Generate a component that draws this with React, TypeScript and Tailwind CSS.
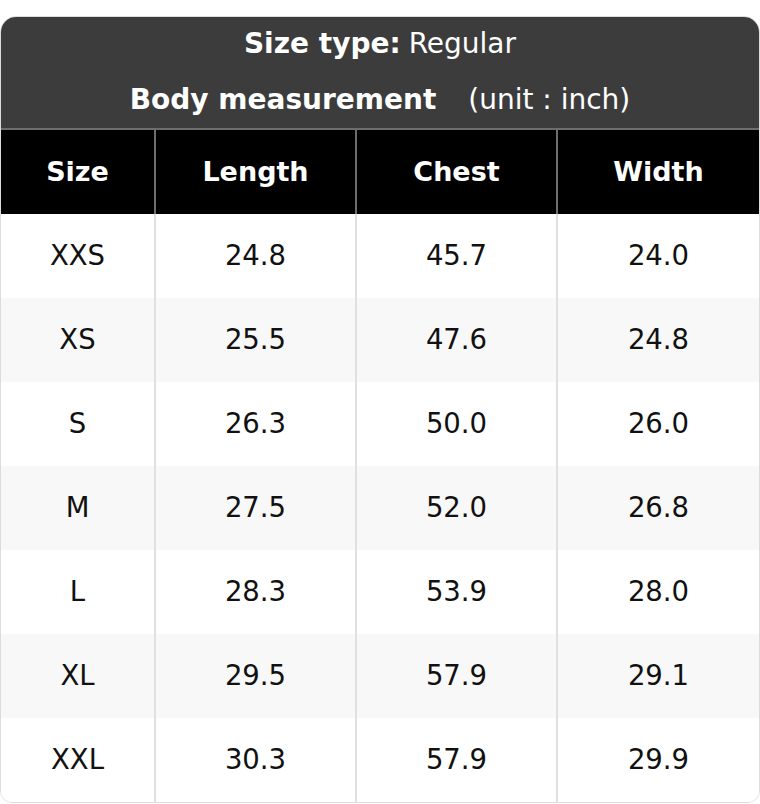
import React from 'react';

const rows = [
    ['XXS', '24.8', '45.7', '24.0'],
    ['XS', '25.5', '47.6', '24.8'],
    ['S', '26.3', '50.0', '26.0'],
    ['M', '27.5', '52.0', '26.8'],
    ['L', '28.3', '53.9', '28.0'],
    ['XL', '29.5', '57.9', '29.1'],
    ['XXL', '30.3', '57.9', '29.9'],
];

const cols = ['Size', 'Length', 'Chest', 'Width'];

const App = () => {
    return (
        <div className="bg-white pt-4 w-[760px] font-['DejaVu_Sans',sans-serif]">
            <div className="rounded-t-2xl rounded-b-xl border border-[#dcdcdc] overflow-hidden">
                <div className="bg-[#3c3c3c] text-white text-[28px] h-[111px] flex flex-col items-center">
                    <div className="h-[54px] flex items-center">
                        <span className="font-bold">Size type:</span>
                        <span className="ml-2">Regular</span>
                    </div>
                    <div className="h-[57px] flex items-center">
                        <span className="font-bold">Body measurement</span>
                        <span className="ml-8">(unit : inch)</span>
                    </div>
                </div>
                <div className="h-[2px] bg-[#6e6e6e]" />
                <div className="grid grid-cols-[153px_201px_201px_1fr] bg-black text-white font-bold text-[27px]">
                    {cols.map((c, i) => (
                        <div
                            key={c}
                            className={`h-[84px] flex items-center justify-center ${i > 0 ? 'border-l-2 border-[#6e6e6e]' : ''}`}
                        >
                            {c}
                        </div>
                    ))}
                </div>
                {rows.map((r, ri) => (
                    <div
                        key={r[0]}
                        className={`grid grid-cols-[153px_201px_201px_1fr] text-[27.5px] text-[#111] ${ri % 2 === 1 ? 'bg-[#f8f8f8]' : 'bg-white'}`}
                    >
                        {r.map((v, i) => (
                            <div
                                key={i}
                                className={`h-[84px] flex items-center justify-center ${i > 0 ? 'border-l-2 border-[#e0e0e0]' : ''}`}
                            >
                                {v}
                            </div>
                        ))}
                    </div>
                ))}
            </div>
        </div>
    );
};

export default App;
